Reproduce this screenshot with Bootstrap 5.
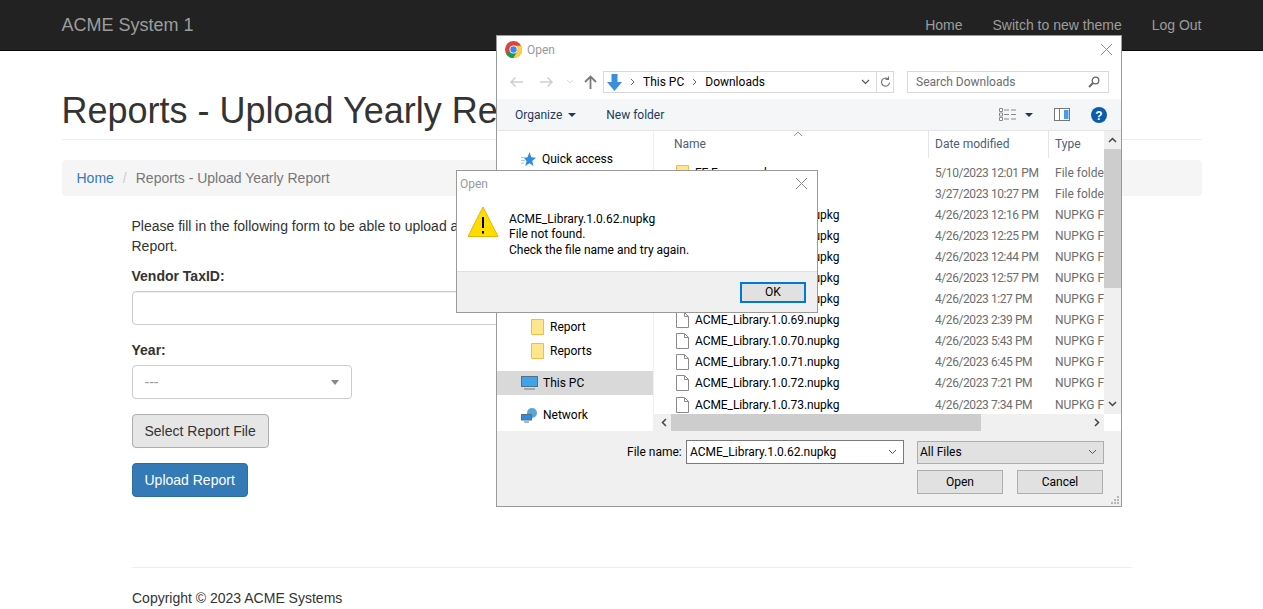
<!DOCTYPE html>
<html lang="en">
<head>
    <meta charset="UTF-8">
    <meta name="viewport" content="width=device-width, initial-scale=1.0">
    <title>Reports - Upload Yearly Report</title>
    <link href="https://cdn.jsdelivr.net/npm/bootstrap@5.3.0/dist/css/bootstrap.min.css" rel="stylesheet">
    <style>
    html, body { height: 609px; overflow: hidden; }
    body { font-family: "Liberation Sans", Arial, sans-serif; font-size: 14px; line-height: 20px; color: #333; position: relative; }
    a { text-decoration: none; }

    .top-bar { height: 51px; background: #222; border-bottom: 1px solid #080808; padding: 0; }
    .page-wrap { width: 1170px; margin: 0 auto; padding: 0 15px; }
    .top-bar .page-wrap { display: flex; justify-content: space-between; align-items: center; height: 50px; }
    .top-brand { font-size: 18px; color: #9d9d9d; }
    .top-links { display: flex; gap: 30px; }
    .top-links a { color: #9d9d9d; }

    .page-title { font-size: 36px; line-height: 40px; font-weight: 500; color: #333; margin: 40px 0 20px; padding-bottom: 8px; border-bottom: 1px solid #eee; height: 49px; }
    .crumbs { background: #f5f5f5; border-radius: 4px; padding: 8px 15px; margin-bottom: 20px; height: 36px; color: #777; display: flex; }
    .crumbs a { color: #337ab7; }
    .crumbs i { font-style: normal; color: #ccc; padding: 0 9px; }

    .form-wrap { width: 1000px; margin: 0 auto 0 70px; }
    .form-wrap p { margin: 0 0 10px; width: 390px; }
    .form-wrap label { font-weight: 700; display: block; margin-bottom: 5px; }
    .tax-input { height: 34px; width: 950px; border: 1px solid #ccc; border-radius: 4px; box-shadow: inset 0 1px 1px rgba(0,0,0,.075); margin-bottom: 15px; }
    .year-select { height: 34px; width: 220px; border: 1px solid #ccc; border-radius: 4px; display: flex; align-items: center; justify-content: space-between; padding: 0 12px; color: #999; margin-bottom: 15px; }
    .year-select b { border-top: 5px solid #888; border-left: 4px solid transparent; border-right: 4px solid transparent; }
    .plain-btn { display: block; height: 34px; padding: 6px 12px; font-size: 14px; line-height: 20px; border-radius: 4px; margin-bottom: 15px; white-space: nowrap; }
    .btn-file { width: 137px; background: #e6e6e6; border: 1px solid #adadad; color: #333; }
    .btn-up { width: 116px; background: #337ab7; border: 1px solid #2e6da4; color: #fff; }
    .foot-line { width: 1000px; border-top: 1px solid #eee; padding-top: 20px; position: absolute; top: 567px; left: 132px; }

    /* windows dialogs */
    .win { position: absolute; background: #fff; font-family: Roboto, "Noto Sans", sans-serif; font-size: 12px; line-height: 16px; color: #000; }
    .file-win { left: 496px; top: 35px; width: 626px; height: 472px; border: 1px solid #9a9a9a; display: flex; flex-direction: column; }
    .win-title { height: 29px; display: flex; align-items: center; padding: 0 0 2px 8px; gap: 5px; color: #999; flex: none; }
    .win-title .x-btn { margin-left: auto; margin-right: 9px; }
    .addr-row { height: 34px; display: flex; align-items: center; flex: none; padding-left: 12px; }
    .nav-arrows { display: flex; align-items: center; width: 94px; flex: none; }
    .addr-box { width: 291px; height: 22px; border: 1px solid #d9d9d9; display: flex; align-items: center; flex: none; }
    .addr-box .addr-path { display: flex; align-items: center; gap: 8px; flex: 1; padding-left: 3px; }
    .addr-box .addr-end { width: 17px; height: 20px; border-left: 1px solid #d9d9d9; display: flex; align-items: center; justify-content: center; }
    .search-box { margin-left: 13px; width: 202px; height: 22px; border: 1px solid #d9d9d9; display: flex; align-items: center; justify-content: space-between; padding: 0 8px; color: #6d6d6d; }
    .tool-row { height: 32px; background: #f5f6f7; border-bottom: 1px solid #e5e5e5; display: flex; align-items: center; padding-left: 18px; color: #1e395b; flex: none; }
    .tool-row .tool-drop::after { content: ""; display: inline-block; border-top: 4px solid #1e395b; border-left: 4px solid transparent; border-right: 4px solid transparent; margin-left: 6px; vertical-align: 2px; }
    .tool-new { margin-left: 30px; }
    .tool-icons { margin-left: auto; display: flex; align-items: center; gap: 21px; padding-right: 14px; }
    .win-body { height: 300px; display: flex; flex: none; }
    .nav-pane { width: 157px; flex: none; border-right: 1px solid #f0f0f0; position: relative; }
    .nav-item { position: absolute; left: 0; width: 156px; height: 24px; display: flex; align-items: center; gap: 6px; }
    .nav-item.nav-pc { gap: 5px; padding-left: 24px; }
    .list-pane { flex: 1; position: relative; min-width: 0; overflow: hidden; }
    .list-head { height: 27px; display: flex; color: #4c607a; padding-left: 20px; align-items: center; }
    .list-head span { flex: none; height: 27px; line-height: 26px; }
    .list-head .col-nm { width: 254px; }
    .list-head .col-dt { width: 120px; border-left: 1px solid #e5e5e5; padding-left: 6px; }
    .list-head .col-ty { border-left: 1px solid #e5e5e5; padding-left: 6px; }
    .sort-mark { position: absolute; left: 140px; top: 0; width: 8px; height: 5px; }
    #rows { margin-top: 4px; }
    .file-row { height: 21.1px; display: flex; align-items: center; white-space: nowrap; padding-left: 21px; }
    .file-row svg { flex: none; width: 15px; margin-right: 5px; }
    .file-row .f-nm { width: 233px; flex: none; letter-spacing: -.08px; }
    .file-row .f-dt { width: 127px; flex: none; padding-left: 7px; color: #6d6d6d; letter-spacing: -.42px; }
    .file-row .f-ty { color: #6d6d6d; }
    .v-scroll { position: absolute; right: 0; top: 0; width: 17px; height: 283px; background: #f0f0f0; }
    .v-scroll .v-thumb { position: absolute; top: 18px; left: 0; width: 17px; height: 139px; background: #cdcdcd; }
    .v-scroll svg { position: absolute; left: 4px; }
    .h-scroll { position: absolute; left: 0; right: 17px; top: 283px; height: 17px; background: #f0f0f0; }
    .h-scroll .h-thumb { position: absolute; left: 17px; top: 0; width: 310px; height: 17px; background: #cdcdcd; }
    .h-scroll svg { position: absolute; top: 4px; }
    .bottom-area { flex: 1; background: #f0f0f0; position: relative; }
    .name-row { position: absolute; left: 130px; top: 9px; display: flex; align-items: center; height: 24px; }
    .name-row .name-lbl { margin-right: 4px; width: 55px; }
    .name-box { width: 218px; height: 24px; background: #fff; border: 1px solid #7a7a7a; display: flex; align-items: center; justify-content: space-between; padding: 0 6px 0 3px; }
    .type-box { margin-left: 13px; width: 187px; height: 23px; background: #e1e1e1; border: 1px solid #adadad; display: flex; align-items: center; justify-content: space-between; padding: 0 6px 0 2px; }
    .dlg-btn { position: absolute; top: 39px; width: 86px; height: 24px; background: #e1e1e1; border: 1px solid #adadad; text-align: center; line-height: 22px; }
    .grip { position: absolute; right: 2px; bottom: 2px; }

    .alert-win { left: 456px; top: 170px; width: 362px; height: 143px; border: 1px solid #9a9a9a; display: flex; flex-direction: column; }
    .alert-title { height: 25px; display: flex; align-items: center; padding-left: 3px; color: #999; justify-content: space-between; padding-right: 10px; flex: none; }
    .alert-msg { height: 75px; display: flex; flex: none; padding-left: 10px; padding-top: 10px; }
    .alert-msg .alert-txt { margin-left: 10px; padding-top: 6px; line-height: 15.3px; }
    .alert-foot { flex: 1; background: #f0f0f0; border-top: 1px solid #dfdfdf; display: flex; justify-content: flex-end; align-items: center; padding-right: 11px; }
    .ok-btn { width: 66px; height: 21px; background: #e1e1e1; border: 2px solid #0078d7; text-align: center; line-height: 17px; }
    </style>
</head>
<body>
    <div class="top-bar">
        <div class="page-wrap">
            <a class="top-brand" href="#">ACME System 1</a>
            <div class="top-links">
                <a href="#">Home</a>
                <a href="#">Switch to new theme</a>
                <a href="#">Log Out</a>
            </div>
        </div>
    </div>

    <div class="page-wrap">
        <h1 class="page-title">Reports - Upload Yearly Report</h1>
        <div class="crumbs"><a href="#">Home</a><i>/</i><span>Reports - Upload Yearly Report</span></div>
        <div class="form-wrap">
            <p>Please fill in the following form to be able to upload a Yearly Report.</p>
            <label>Vendor TaxID:</label>
            <div class="tax-input"></div>
            <label>Year:</label>
            <div class="year-select"><span>---</span><b></b></div>
            <button class="plain-btn btn-file">Select Report File</button>
            <button class="plain-btn btn-up">Upload Report</button>
        </div>
    </div>
    <div class="foot-line">Copyright © 2023 ACME Systems</div>

    <!-- file dialog -->
    <div class="win file-win">
        <div class="win-title">
            <svg width="17" height="17" viewBox="0 0 16 16"><circle cx="8" cy="8" r="8" fill="#db4437"/><path d="M8 8 L1 12 A8 8 0 0 0 8 16 L12.5 8Z" fill="#0f9d58"/><path d="M8 4.5 H15.4 A8 8 0 0 1 8 16 L12 8.5Z" fill="#ffcd40"/><circle cx="8" cy="8" r="3.8" fill="#fff"/><circle cx="8" cy="8" r="3" fill="#4285f4"/></svg>
            <span>Open</span>
            <svg class="x-btn" width="11" height="11" viewBox="0 0 11 11"><path d="M0 0L11 11M11 0L0 11" stroke="#8a8a8a" fill="none"/></svg>
        </div>
        <div class="addr-row">
            <div class="nav-arrows">
                <svg width="15" height="12" viewBox="0 0 15 12"><path d="M14 6H2M6.500 1.500L2 6l4.500 4.500" stroke="#d0d0d0" stroke-width="1.500" fill="none"/></svg>
                <svg style="margin-left:15px" width="15" height="12" viewBox="0 0 15 12"><path d="M1 6h12M8.500 1.500L13 6l-4.500 4.500" stroke="#d0d0d0" stroke-width="1.500" fill="none"/></svg>
                <svg style="margin-left:12px" width="8" height="6" viewBox="0 0 8 6"><path d="M1 1l3 3 3-3" stroke="#d8d8d8" fill="none"/></svg>
                <svg style="margin-left:10px" width="13" height="14" viewBox="0 0 13 14"><path d="M6.500 14V2M1 7l5.500-5.500L12 7" stroke="#7a7a7a" stroke-width="1.800" fill="none"/></svg>
            </div>
            <div class="addr-box">
                <div class="addr-path">
                    <svg width="15" height="17" viewBox="0 0 15 17"><path d="M4.500 0h6v8H15l-7.500 9L0 8h4.500z" fill="#3a8fdc"/></svg>
                    <svg width="5" height="8" viewBox="0 0 5 8"><path d="M1 1l3 3-3 3" stroke="#666" fill="none"/></svg>
                    <span>This PC</span>
                    <svg width="5" height="8" viewBox="0 0 5 8"><path d="M1 1l3 3-3 3" stroke="#666" fill="none"/></svg>
                    <span>Downloads</span>
                </div>
                <svg style="margin-right:6px" width="9" height="6" viewBox="0 0 9 6"><path d="M1 1l3.500 3.500L8 1" stroke="#555" stroke-width="1.200" fill="none"/></svg>
                <div class="addr-end"><svg width="11" height="12" viewBox="0 0 11 12"><path d="M9.500 6.500A4 4 0 1 1 8 3M8.500 0.500V3.500H5.500" stroke="#777" stroke-width="1.200" fill="none"/></svg></div>
            </div>
            <div class="search-box">
                <span>Search Downloads</span>
                <svg width="12" height="12" viewBox="0 0 12 12"><circle cx="7.500" cy="4.500" r="3.300" stroke="#666" stroke-width="1.300" fill="none"/><path d="M5 7L1 11" stroke="#666" stroke-width="1.800"/></svg>
            </div>
        </div>
        <div class="tool-row">
            <span class="tool-drop">Organize</span>
            <span class="tool-new">New folder</span>
            <div class="tool-icons">
                <span class="d-flex align-items-center gap-2">
                    <svg width="18" height="13" viewBox="0 0 18 13"><path d="M0.500 0.500h3v3h-3zM0.500 5h3v3h-3zM0.500 9.500h3v3h-3z" stroke="#888" fill="#fff"/><path d="M5 2h5M12 2h5M5 6.500h5M12 6.500h5M5 11h5M12 11h5" stroke="#888"/></svg>
                    <svg width="8" height="4" viewBox="0 0 8 4"><path d="M0 0h8L4 4z" fill="#1e395b"/></svg>
                </span>
                <svg width="16" height="13" viewBox="0 0 16 13"><rect x=".5" y=".5" width="15" height="12" fill="#fff" stroke="#777"/><rect x="10" y="2" width="4.500" height="9" fill="#4a9be8"/><path d="M5.500 1v11" stroke="#777"/></svg>
                <svg width="16" height="16" viewBox="0 0 16 16"><circle cx="8" cy="8" r="8" fill="#0b5cad"/><text x="8" y="12.500" text-anchor="middle" fill="#fff" font-family="Liberation Sans" font-weight="700" font-size="12">?</text></svg>
            </div>
        </div>
        <div class="win-body">
            <div class="nav-pane">
                <div class="nav-item" style="top:16px;padding-left:24px">
                    <svg width="15" height="15" viewBox="0 0 16 16"><path d="M9 0l2 5.500 5 .5-4 3.500 1.200 5.500L9 12l-4.500 3L6 9.500 3 6l4-.5z" fill="#2f8be0"/><path d="M0 6h3M0 9h4M0 12h3" stroke="#8cc3f0"/></svg>
                    <span>Quick access</span>
                </div>
                <div class="nav-item" style="top:184px;padding-left:34px">
                    <svg width="13" height="16" viewBox="0 0 13 16"><path d="M.5.500h12v15H.5z" fill="#ffe58c" stroke="#e8c04a"/></svg><span>Report</span>
                </div>
                <div class="nav-item" style="top:208px;padding-left:34px">
                    <svg width="13" height="16" viewBox="0 0 13 16"><path d="M.5.500h12v15H.5z" fill="#ffe58c" stroke="#e8c04a"/></svg><span>Reports</span>
                </div>
                <div class="nav-item nav-pc" style="top:240px;background:#d9d9d9">
                    <svg width="17" height="15" viewBox="0 0 17 15"><rect x=".5" y=".5" width="16" height="10" fill="#3ea3ea" stroke="#56707f"/><path d="M3 13h11" stroke="#8a9aa5" stroke-width="1.500"/></svg><span>This PC</span>
                </div>
                <div class="nav-item nav-pc" style="top:272px">
                    <svg width="17" height="15" viewBox="0 0 17 15"><circle cx="11" cy="5" r="5" fill="#5aa5d8"/><rect x="0.500" y="6.500" width="10" height="5.500" fill="#2f8be0" stroke="#56707f"/><path d="M3 14h5" stroke="#56707f"/></svg><span>Network</span>
                </div>
            </div>
            <div class="list-pane" id="listPane">
                <svg class="sort-mark" viewBox="0 0 8 5"><path d="M0 5l4-4 4 4" stroke="#999" fill="none"/></svg>
                <div class="list-head">
                    <span class="col-nm">Name</span>
                    <span class="col-dt">Date modified</span>
                    <span class="col-ty">Type</span>
                </div>
                <div id="rows"></div>
                <div class="v-scroll">
                    <svg style="top:6px" width="9" height="6" viewBox="0 0 9 6"><path d="M1 5l3.500-3.500L8 5" stroke="#444" stroke-width="1.500" fill="none"/></svg>
                    <div class="v-thumb"></div>
                    <svg style="top:270px" width="9" height="6" viewBox="0 0 9 6"><path d="M1 1l3.500 3.500L8 1" stroke="#444" stroke-width="1.500" fill="none"/></svg>
                </div>
                <div class="h-scroll">
                    <svg style="left:7px" width="6" height="9" viewBox="0 0 6 9"><path d="M5 1L1.500 4.500 5 8" stroke="#444" stroke-width="1.500" fill="none"/></svg>
                    <div class="h-thumb"></div>
                    <svg style="right:4px" width="6" height="9" viewBox="0 0 6 9"><path d="M1 1l3.500 3.500L1 8" stroke="#444" stroke-width="1.500" fill="none"/></svg>
                </div>
            </div>
        </div>
        <div class="bottom-area">
            <div class="name-row">
                <span class="name-lbl">File name:</span>
                <div class="name-box"><span>ACME_Library.1.0.62.nupkg</span><svg width="9" height="6" viewBox="0 0 9 6"><path d="M1 1l3.500 3.500L8 1" stroke="#555" fill="none"/></svg></div>
                <div class="type-box"><span>All Files</span><svg width="9" height="6" viewBox="0 0 9 6"><path d="M1 1l3.500 3.500L8 1" stroke="#555" fill="none"/></svg></div>
            </div>
            <div class="dlg-btn" style="left:420px">Open</div>
            <div class="dlg-btn" style="left:520px">Cancel</div>
            <svg class="grip" width="9" height="9" viewBox="0 0 9 9"><path d="M7 1h2v2H7zM4 4h2v2H4zM7 4h2v2H7zM1 7h2v2H1zM4 7h2v2H4zM7 7h2v2H7z" fill="#b5b5b5"/></svg>
        </div>
    </div>

    <!-- error box -->
    <div class="win alert-win">
        <div class="alert-title">
            <span>Open</span>
            <svg width="11" height="11" viewBox="0 0 11 11"><path d="M0 0L11 11M11 0L0 11" stroke="#8a8a8a" fill="none"/></svg>
        </div>
        <div class="alert-msg">
            <svg width="32" height="32" viewBox="0 0 32 32"><path d="M16 1L31 30.500H1z" fill="#ffdd00" stroke="#e8b400"/><path d="M16 11v11" stroke="#000" stroke-width="2"/><path d="M15 25h2v2.500h-2z" fill="#000"/></svg>
            <div class="alert-txt">ACME_Library.1.0.62.nupkg<br>File not found.<br>Check the file name and try again.</div>
        </div>
        <div class="alert-foot"><div class="ok-btn">OK</div></div>
    </div>

    <script>
    const folderIcon = '<svg height="16" viewBox="0 0 15 16"><path d="M1.500.500h12v15h-12z" fill="#ffe58c" stroke="#e8c04a"/></svg>';
    const fileIcon = '<svg height="16" viewBox="0 0 13 16"><path d="M.5.500h8l4 4v11H.5zM8.500.500v4h4" fill="#fff" stroke="#8a8a8a"/></svg>';

    const files = [
        ["FF Framework", "5/10/2023 12:01 PM", "File folde", 1],
        ["CitrixApp", "3/27/2023 10:27 PM", "File folde", 1],
        ["ACME_Library.1.0.63.nupkg", "4/26/2023 12:16 PM", "NUPKG Fi"],
        ["ACME_Library.1.0.64.nupkg", "4/26/2023 12:25 PM", "NUPKG Fi"],
        ["ACME_Library.1.0.65.nupkg", "4/26/2023 12:44 PM", "NUPKG Fi"],
        ["ACME_Library.1.0.66.nupkg", "4/26/2023 12:57 PM", "NUPKG Fi"],
        ["ACME_Library.1.0.68.nupkg", "4/26/2023 1:27 PM", "NUPKG Fi"],
        ["ACME_Library.1.0.69.nupkg", "4/26/2023 2:39 PM", "NUPKG Fi"],
        ["ACME_Library.1.0.70.nupkg", "4/26/2023 5:43 PM", "NUPKG Fi"],
        ["ACME_Library.1.0.71.nupkg", "4/26/2023 6:45 PM", "NUPKG Fi"],
        ["ACME_Library.1.0.72.nupkg", "4/26/2023 7:21 PM", "NUPKG Fi"],
        ["ACME_Library.1.0.73.nupkg", "4/26/2023 7:34 PM", "NUPKG Fi"]
    ];

    let str = "";
    files.forEach(f => {
        str += `<div class="file-row">${f[3] ? folderIcon : fileIcon}<span class="f-nm">${f[0]}</span><span class="f-dt">${f[1]}</span><span class="f-ty">${f[2]}</span></div>`;
    });
    document.getElementById("rows").innerHTML = str;
    </script>
    <script src="https://cdn.jsdelivr.net/npm/bootstrap@5.3.0/dist/js/bootstrap.bundle.min.js"></script>
</body>
</html>
